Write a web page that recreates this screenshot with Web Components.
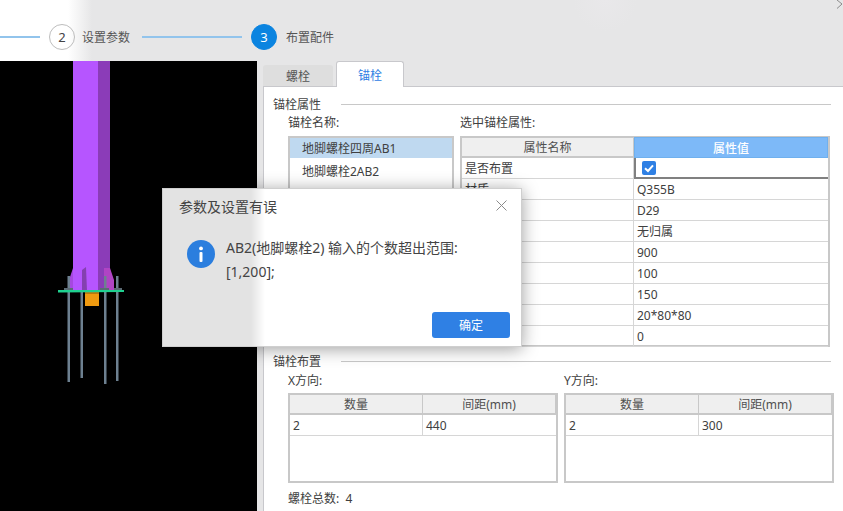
<!DOCTYPE html>
<html lang="zh">
<head>
<meta charset="utf-8">
<title>布置配件</title>
<style>
    html, body {margin: 0; width: 843px; height: 511px; overflow: hidden; background: #e6e6e7;}
    body {position: relative; color: #404040; font: 12px "Noto Sans", "Noto Sans CJK SC", sans-serif;}
</style>
</head>
<body>
<x-app>
    <x-stepper slot="top">
        <x-step slot="step" num="2" style="--lead: 40px">设置参数</x-step>
        <x-step slot="step" num="3" active style="--lead: 100px">布置配件</x-step>
    </x-stepper>
    <x-model slot="view"></x-model>
    <x-tabs slot="side" tabs="螺栓,锚栓" active="1">
        <x-group title="锚栓属性">
            <x-anchor-props></x-anchor-props>
        </x-group>
        <x-group title="锚栓布置" style="margin-top: 6px">
            <x-layout-props></x-layout-props>
        </x-group>
    </x-tabs>
</x-app>
<x-dialog heading="参数及设置有误" action="确定">
    AB2(地脚螺栓2) 输入的个数超出范围:<br>[1,200];
</x-dialog>

<script>
"use strict";

class App extends HTMLElement {
    constructor() {
        super();
        this.attachShadow({mode: "open"}).innerHTML = `
            <style>
                :host {display: grid; grid-template: 61px 450px / 257px 586px; width: 843px; height: 511px;}
                .top {grid-column: 1 / 3; display: block;}
            </style>
            <div class="top"><slot name="top"></slot></div>
            <slot name="view"></slot>
            <slot name="side"></slot>
        `;
    }
}

class Stepper extends HTMLElement {
    constructor() {
        super();
        this.attachShadow({mode: "open"}).innerHTML = `
            <style>
                :host {
                    display: flex; height: 61px; padding: 24px 0 0; box-sizing: border-box; position: relative;
                    background:
                        radial-gradient(circle 32px at 605px 0, #e9e8ea, transparent),
                        linear-gradient(to right, #fff 68px, #e6e6e7 92px);
                }
                .close {position: absolute; right: 0; top: 0; width: 7px; height: 9px;}
            </style>
            <slot name="step"></slot>
            <svg class="close" viewBox="0 0 7 9"><path d="M1 0 L6 4 L1 8.5" stroke="#8a8a8a" fill="none"/></svg>
        `;
    }
}

class Step extends HTMLElement {
    constructor() {
        super();
        this.attachShadow({mode: "open"}).innerHTML = `
            <style>
                :host {display: flex; height: 26px; align-items: center; color: #555;}
                .lead {width: var(--lead); height: 2px; background: #92c4ec; margin-right: 9px;}
                .num {
                    width: 26px; height: 26px; box-sizing: border-box; border-radius: 50%; border: 1px solid #bdbdbd;
                    display: flex; align-items: center; justify-content: center; color: #444; font-size: 13px;
                }
                :host([active]) .num {background: #0b84e0; border-color: #0b84e0; color: #fff;}
                .label {margin: 0 12px 0 7px;}
                :host([active]) .label {margin-left: 9px;}
            </style>
            <div class="lead"></div>
            <div class="num">${this.getAttribute("num")}</div>
            <div class="label"><slot></slot></div>
        `;
    }
}

class Model extends HTMLElement {
    constructor() {
        super();
        // coordinates are page pixels, viewBox starts at the top of the black view
        this.attachShadow({mode: "open"}).innerHTML = `
            <style>
                :host {display: block; background: #000;}
                svg {display: block;}
            </style>
            <svg width="257" height="450" viewBox="0 61 257 450">
                <rect x="73" y="60" width="25" height="232" fill="#b655ff"/>
                <rect x="98" y="60" width="12" height="232" fill="#8b3cb8"/>
                <polygon points="73,268 70,277 70,291 73,291" fill="#a648e0"/>
                <polygon points="82,270 86,267 87,291 82,291" fill="#8440b0"/>
                <polygon points="104,268 110,268 114,280 114,291 104,291" fill="#b044c4"/>
                <rect x="85" y="292" width="14" height="14" fill="#ef9a10"/>
                <rect x="85" y="292" width="14" height="2" fill="#b9770f"/>
                <g fill="#6d8090">
                    <rect x="67.5" y="276" width="2.5" height="106"/>
                    <rect x="80.5" y="292" width="2.5" height="86"/>
                    <rect x="104" y="276" width="2.5" height="108"/>
                    <rect x="116" y="276" width="2.5" height="105"/>
                </g>
                <g fill="#5b6a74">
                    <rect x="64" y="288" width="9" height="2"/>
                    <rect x="100" y="288" width="9" height="2"/>
                    <rect x="114" y="288" width="8" height="2"/>
                </g>
                <polygon points="58,290 124,290 124,292 58,292.5" fill="#1fd08f"/>
            </svg>
        `;
    }
}

class Tabs extends HTMLElement {
    constructor() {
        super();
        const active = Number(this.getAttribute("active"));
        const tabs = this.getAttribute("tabs").split(",")
            .map((t, i) => `<div class="tab${i === active ? " on" : ""}">${t}</div>`).join("");
        this.attachShadow({mode: "open"}).innerHTML = `
            <style>
                :host {display: flex; flex-direction: column; padding-left: 6px; height: 450px; box-sizing: border-box;}
                .bar {display: flex; height: 25px; align-items: flex-end; gap: 3px; position: relative; z-index: 1;}
                .tab {
                    width: 70px; height: 21px; box-sizing: border-box; background: #dedede; border-radius: 3px 3px 0 0;
                    display: flex; align-items: center; justify-content: center; color: #555;
                }
                .on {
                    width: 68px; height: 26px; background: #fff; color: #2f80e4; border: 1px solid #c8c8cc;
                    border-bottom: 0; margin-bottom: -1px;
                }
                .panel {
                    flex: 1; background: #fff; border: solid #c8c8cc; border-width: 1px 0 0 1px; padding: 9px 12px 0 9px;
                }
            </style>
            <div class="bar">${tabs}</div>
            <div class="panel"><slot></slot></div>
        `;
    }
}

class Group extends HTMLElement {
    constructor() {
        super();
        this.attachShadow({mode: "open"}).innerHTML = `
            <style>
                :host {display: block;}
                .head {display: flex; align-items: center; height: 16px; color: #444;}
                .head i {flex: 1; height: 1px; background: #c8c8c8; margin-left: 20px;}
            </style>
            <div class="head"><span>${this.getAttribute("title")}</span><i></i></div>
            <slot></slot>
        `;
    }
}

class Grid extends HTMLElement {
    constructor() {
        super();
        const head = this.getAttribute("head").split("|");
        const rows = (this.getAttribute("rows") || "").split(";").map(r => r.split("|"));
        const hot = this.getAttribute("hot");
        const heads = head.map((h, i) => `<div class="th${String(i) === hot ? " hot" : ""}">${h}</div>`).join("");
        const cells = rows.map(r => r.map(c => {
            if (c === "[x]") {
                return `<div class="td sel"><span class="check"><svg width="14" height="14" viewBox="0 0 14 14"><path d="M3 7.2 L6 10 L11 4.4" stroke="#fff" stroke-width="2" fill="none"/></svg></span></div>`;
            }
            return `<div class="td">${c}</div>`;
        }).join("")).join("");
        this.attachShadow({mode: "open"}).innerHTML = `
            <style>
                :host {display: block; box-sizing: border-box; border: 2px solid #c8c8c8; border-width: 1px 2px 2px; background: #fff;}
                .grid {display: grid; grid-template-columns: var(--cols); grid-auto-rows: 21px;}
                .th, .td {box-sizing: border-box; display: flex; align-items: center; white-space: nowrap; overflow: hidden;
                    border: solid #d6d6d6; border-width: 0 1px 1px 0; color: #404040;}
                .th {justify-content: center; background: #efefef; border-color: #c8c8c8; border-width: 1px 1px 2px 0; color: #505050;}
                .td {padding-left: 3px;}
                .th:last-of-type, .td:nth-child(2n) {border-right: 0;}
                .hot {background: #7db9f8; color: #fff; border-color: #6fb0ee; border-width: 1px; font-weight: 500;}
                .sel {border: 2px solid #808080; padding-left: 6px; border-top-width: 0;}
                .check {width: 14px; height: 14px; border-radius: 2px; background: #2f80e4; display: block;}
                svg {display: block;}
            </style>
            <div class="grid">${heads}${cells}</div>
        `;
    }
}

class AnchorProps extends HTMLElement {
    constructor() {
        super();
        this.attachShadow({mode: "open"}).innerHTML = `
            <style>
                :host {display: grid; grid-template-columns: 166px 371px; column-gap: 6px; padding-left: 15px;}
                .label {height: 24px; padding-top: 1px; box-sizing: border-box;}
                .list {height: 211px; box-sizing: border-box; border: 2px solid #c8c8c8;}
                .item {height: 20px; line-height: 21px; padding-left: 12px; margin-bottom: 3px;}
                .item.on {background: #bfd9f0;}
                x-grid {--cols: 172px 1fr; height: 211px; width: 370px;}
            </style>
            <div class="label">锚栓名称:</div>
            <div class="label">选中锚栓属性:</div>
            <div class="list">
                <div class="item on">地脚螺栓四周AB1</div>
                <div class="item">地脚螺栓2AB2</div>
            </div>
            <x-grid hot="1" head="属性名称|属性值" rows="是否布置|[x];材质|Q355B;|D29;|无归属;|900;|100;|150;|20*80*80;|0"></x-grid>
        `;
    }
}

class LayoutProps extends HTMLElement {
    constructor() {
        super();
        this.attachShadow({mode: "open"}).innerHTML = `
            <style>
                :host {display: block; padding-left: 15px;}
                .cols {display: grid; grid-template-columns: 270px 270px; column-gap: 6px;}
                .label {height: 24px; padding-top: 2px; box-sizing: border-box;}
                x-grid {--cols: 133px 1fr; height: 90px; width: 270px;}
                .total {margin-top: 6px;}
            </style>
            <div class="cols">
                <div>
                    <div class="label">X方向:</div>
                    <x-grid head="数量|间距(mm)" rows="2|440"></x-grid>
                </div>
                <div>
                    <div class="label">Y方向:</div>
                    <x-grid head="数量|间距(mm)" rows="2|300"></x-grid>
                </div>
            </div>
            <div class="total">螺栓总数:&nbsp;&nbsp;4</div>
        `;
    }
}

class Dialog extends HTMLElement {
    constructor() {
        super();
        this.attachShadow({mode: "open"}).innerHTML = `
            <style>
                :host {
                    position: absolute; left: 162px; top: 188px; width: 360px; height: 159px; box-sizing: border-box;
                    display: flex; flex-direction: column; z-index: 5; color: #444;
                    background: linear-gradient(to right, #e3e3e3 88px, #fff 102px);
                    border: 1px solid #cfcfcf;
                    box-shadow: 0 2px 16px rgba(0, 0, 0, .38);
                }
                .head {display: flex; align-items: center; justify-content: space-between; height: 33px; padding: 0 14px 0 16px; font-size: 14px;}
                svg {display: block;}
                .body {flex: 1; display: flex; gap: 11px; padding: 13px 0 0 24px; font-size: 14px; line-height: 24px;}
                .msg {margin-top: 1px;}
                .icon {width: 28px; height: 28px; border-radius: 50%; background: #2b7ede; margin-top: 5px; flex: none;}
                .foot {display: flex; justify-content: flex-end; padding: 0 11px 8px 0;}
                button {
                    width: 78px; height: 26px; border: 0; border-radius: 3px; background: #2f80e4; color: #fff;
                    font: inherit; font-size: 12px; padding: 0;
                }
            </style>
            <div class="head">
                <span>${this.getAttribute("heading")}</span>
                <svg width="11" height="11" viewBox="0 0 11 11"><path d="M.5 .5 L10.5 10.5 M10.5 .5 L.5 10.5" stroke="#8a8a8a" fill="none"/></svg>
            </div>
            <div class="body">
                <svg class="icon" viewBox="0 0 28 28"><circle cx="14" cy="8.4" r="1.9" fill="#fff"/><rect x="12.5" y="12" width="3" height="10" rx="1" fill="#fff"/></svg>
                <div class="msg"><slot></slot></div>
            </div>
            <div class="foot"><button>${this.getAttribute("action")}</button></div>
        `;
    }
}

customElements.define("x-app", App);
customElements.define("x-stepper", Stepper);
customElements.define("x-step", Step);
customElements.define("x-model", Model);
customElements.define("x-tabs", Tabs);
customElements.define("x-group", Group);
customElements.define("x-grid", Grid);
customElements.define("x-anchor-props", AnchorProps);
customElements.define("x-layout-props", LayoutProps);
customElements.define("x-dialog", Dialog);
</script>
</body>
</html>
